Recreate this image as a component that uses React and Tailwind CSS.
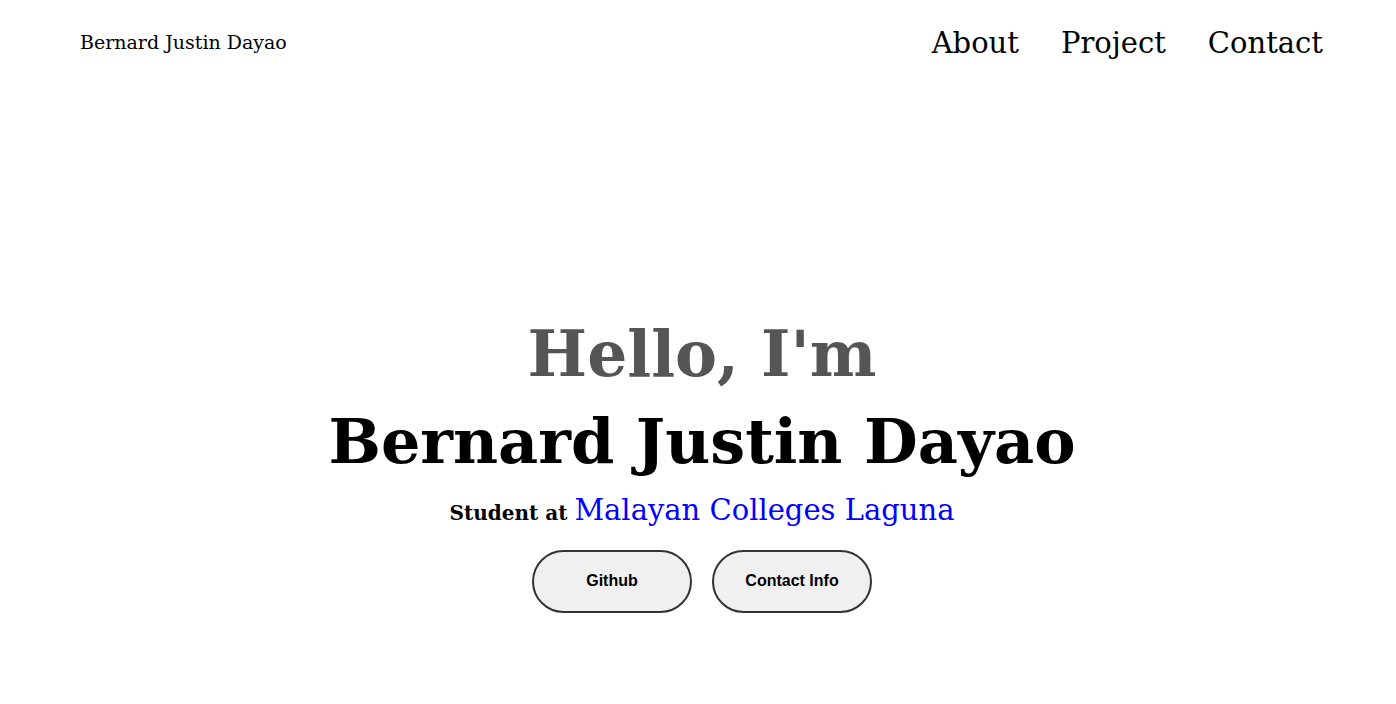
import React from 'react';

const serif = { fontFamily: '"DejaVu Serif", "Liberation Serif", serif' };

export default function App() {
  return (
    <div className="min-h-screen bg-white text-black" style={serif}>
      {/* Header */}
      <header className="flex items-center justify-between pl-[80px] pr-[73px] h-[84px]">
        <div className="text-[19px]">Bernard Justin Dayao</div>
        <nav className="flex items-center gap-[42px] text-[29px] pt-[3px]">
          <a href="#about">About</a>
          <a href="#project">Project</a>
          <a href="#contact">Contact</a>
        </nav>
      </header>

      {/* Hero */}
      <section className="flex flex-col items-center pt-[226px] pl-[8px]">
        <h1 className="text-[63px] leading-[88px] font-bold text-[#555555]">Hello, I'm</h1>
        <h1 className="text-[62px] leading-[88px] font-bold">Bernard Justin Dayao</h1>
        <p className="text-[20px] font-bold mt-[3px]">
          Student at <span className="text-[29px] font-normal text-[#0000ff]">Malayan Colleges Laguna</span>
        </p>
        <div className="flex gap-[20px] mt-[17px]">
          <button className="w-[160px] h-[63px] rounded-full border-2 border-[#333] bg-[#f0f0f0] text-[16px] font-bold font-['Liberation_Sans',sans-serif]">Github</button>
          <button className="w-[160px] h-[63px] rounded-full border-2 border-[#333] bg-[#f0f0f0] text-[16px] font-bold font-['Liberation_Sans',sans-serif]">Contact Info</button>
        </div>
      </section>
    </div>
  );
}
